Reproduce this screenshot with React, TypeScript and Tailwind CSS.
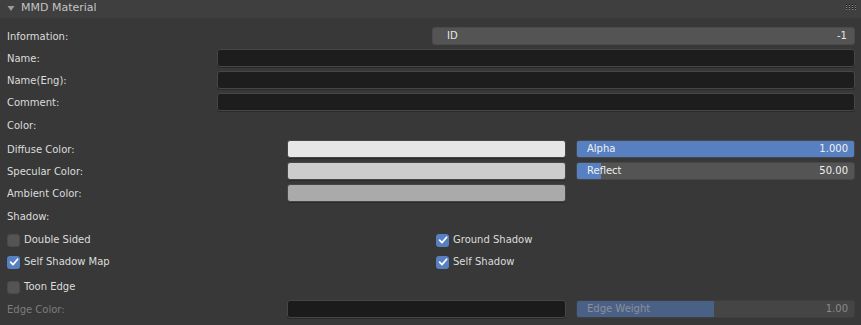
import React from 'react';

const font = { fontFamily: '"DejaVu Sans", Verdana, sans-serif' };

const Label = ({
  children,
  dim,
  flat,
  className = '',
}: {
  children: React.ReactNode;
  dim?: boolean;
  flat?: boolean;
  className?: string;
}) => (
  <span
    className={`relative ${flat ? '' : '-top-[1px]'} text-[10px] leading-none whitespace-nowrap ${
      dim ? 'text-[#7c7c7c]' : 'text-[#dcdcdc]'
    } ${className}`}
  >
    {children}
  </span>
);

const Field = ({ className = '' }: { className?: string }) => (
  <div className={`h-[18px] rounded-[3px] border border-[#464646] shadow-[0_1px_0_#2a2a2a] ${className}`} />
);

const Slider = ({ label, value, fill, dim }: { label: string; value: string; fill: number; dim?: boolean }) => (
  <div
    className={`relative w-[279px] h-[18px] rounded-[3px] overflow-hidden border ${
      dim ? 'border-[#3f3f3f] bg-[#454545]' : 'border-[#474747] bg-[#545454]'
    }`}
  >
    <div
      className={`absolute left-0 top-0 bottom-0 ${dim ? 'bg-[#4a6187]' : 'bg-[#5680c2]'}`}
      style={{ width: `${fill}%` }}
    />
    <div className="relative flex h-full items-center justify-between pl-[10px] pr-[6px]">
      <Label flat dim={dim} className={dim ? '!text-[#8a8f98]' : '!text-[#f0f0f0]'}>{label}</Label>
      <Label flat dim={dim} className={dim ? '!text-[#8a8a8a]' : '!text-[#f0f0f0]'}>{value}</Label>
    </div>
  </div>
);

const Check = ({ label, checked }: { label: string; checked?: boolean }) => (
  <div className="flex items-center gap-[4px]">
    <div
      className={`w-[13px] h-[13px] rounded-[3px] flex items-center justify-center ${
        checked ? 'bg-[#5680c2]' : 'bg-[#545454] border border-[#4a4a4a]'
      }`}
    >
      {checked && (
        <svg width="10" height="10" viewBox="0 0 10 10">
          <path d="M1.6 5.2 L4 7.6 L8.6 2.2" fill="none" stroke="#ffffff" strokeWidth="1.7" strokeLinecap="round" strokeLinejoin="round" />
        </svg>
      )}
    </div>
    <Label flat>{label}</Label>
  </div>
);

const Row = ({ children, className = '' }: { children: React.ReactNode; className?: string }) => (
  <div className={`flex h-[22px] items-center ${className}`}>{children}</div>
);

export default function App() {
  return (
    <div className="w-[861px] h-[325px] bg-[#383838] overflow-hidden" style={font}>
      <div className="h-[18px] bg-[#3f3f3f] flex items-center pl-[7px] pr-[5px]">
        <svg width="8" height="8" viewBox="0 0 8 8" className="mr-[6px] -mt-[2px]">
          <path d="M0.5 2 L7.5 2 L4 7 Z" fill="#9a9a9a" />
        </svg>
        <Label className="!text-[#c4c4c4] text-[11px] -mt-[2px]">MMD Material</Label>
        <svg width="10" height="7" viewBox="0 0 10 7" className="ml-auto -mt-[4px]">
          {[0, 3, 6, 9].map((x) =>
            [0, 2, 4].map((y) => <rect key={`${x}-${y}`} x={x} y={y} width="1" height="1" fill="#1a1a1a" />)
          )}
          {[0, 3, 6, 9].map((x) =>
            [1, 3, 5].map((y) => <rect key={`b${x}-${y}`} x={x} y={y} width="1" height="1" fill="#8a8a8a" />)
          )}
        </svg>
      </div>

      <div className="pt-[7px] pl-[7px] pr-[6px] flex flex-col">
        <Row>
          <div className="flex-1">
            <Label>Information:</Label>
          </div>
          <div className="w-[423px] h-[18px] rounded-[3px] bg-[#545454] border border-[#4a4a4a] flex items-center justify-between pl-[14px] pr-[7px]">
            <Label flat className="!text-[#e6e6e6]">ID</Label>
            <Label flat className="!text-[#e6e6e6]">-1</Label>
          </div>
        </Row>
        <Row>
          <div className="w-[210px]"><Label>Name:</Label></div>
          <Field className="flex-1 bg-[#1d1d1d]" />
        </Row>
        <Row>
          <div className="w-[210px]"><Label>Name(Eng):</Label></div>
          <Field className="flex-1 bg-[#1d1d1d]" />
        </Row>
        <Row>
          <div className="w-[210px]"><Label>Comment:</Label></div>
          <Field className="flex-1 bg-[#1d1d1d]" />
        </Row>

        <Row className="mt-[3px]">
          <Label>Color:</Label>
        </Row>
        <Row>
          <div className="w-[280px]"><Label>Diffuse Color:</Label></div>
          <Field className="w-[279px] bg-[#e6e6e6] border-[#5a5a5a]" />
          <div className="ml-[10px]"><Slider label="Alpha" value="1.000" fill={100} /></div>
        </Row>
        <Row>
          <div className="w-[280px]"><Label>Specular Color:</Label></div>
          <Field className="w-[279px] bg-[#cccccc] border-[#5a5a5a]" />
          <div className="ml-[10px]"><Slider label="Reflect" value="50.00" fill={8.6} /></div>
        </Row>
        <Row>
          <div className="w-[280px]"><Label>Ambient Color:</Label></div>
          <Field className="w-[279px] bg-[#aaaaaa] border-[#5a5a5a]" />
        </Row>

        <Row className="mt-[3px]">
          <Label>Shadow:</Label>
        </Row>
        <Row>
          <div className="w-[429px]"><Check label="Double Sided" /></div>
          <Check label="Ground Shadow" checked />
        </Row>
        <Row>
          <div className="w-[429px]"><Check label="Self Shadow Map" checked /></div>
          <Check label="Self Shadow" checked />
        </Row>

        <Row className="mt-[3px]">
          <Check label="Toon Edge" />
        </Row>
        <Row>
          <div className="w-[280px]"><Label dim>Edge Color:</Label></div>
          <Field className="w-[279px] bg-[#1b1b1b] border-[#3c3c3c]" />
          <div className="ml-[10px]"><Slider label="Edge Weight" value="1.00" fill={49.5} dim /></div>
        </Row>
      </div>
    </div>
  );
}
